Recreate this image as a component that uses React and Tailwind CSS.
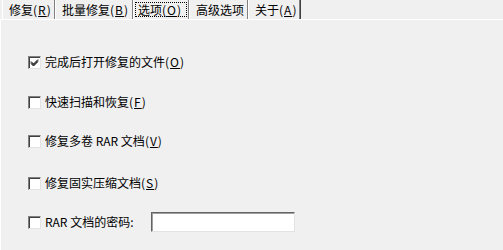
import React, { useState } from "react";

const FONT = { fontFamily: '"Noto Sans CJK SC", "Noto Sans", sans-serif' };

function Key({ k }) {
  return (
    <span className="tracking-[1px]">
      (<span className="underline underline-offset-1">{k}</span>)
    </span>
  );
}

const tabs = [
  { label: "修复", k: "R", w: "w-[53px]" },
  { label: "批量修复", k: "B", w: "w-[78px]" },
  { label: "选项", k: "O", w: "w-[56px]", active: true },
  { label: "高级选项", k: "", w: "w-[59px]" },
  { label: "关于", k: "A", w: "w-[52px]" },
];

function Check({ checked, onChange }) {
  return (
    <button
      type="button"
      onClick={onChange}
      className="w-[13px] h-[13px] shrink-0 bg-white border border-t-[#808080] border-l-[#808080] border-b-[#e3e3e3] border-r-[#e3e3e3] shadow-[inset_1px_1px_0_#404040] flex items-center justify-center p-0"
    >
      {checked && (
        <svg width="9" height="9" viewBox="0 0 9 9">
          <path d="M1 3.5 L3.5 6 L8 1.5 M1 4.5 L3.5 7 L8 2.5 M1 5.5 L3.5 8 L8 3.5" stroke="#000" strokeWidth="1" fill="none" />
        </svg>
      )}
    </button>
  );
}

export default function App() {
  const [opts, setOpts] = useState({ open: true, fast: false, vol: false, solid: false, pwd: false });
  const [pwd, setPwd] = useState("");
  const toggle = (k) => setOpts((o) => ({ ...o, [k]: !o[k] }));

  const rows = [
    { k: "open", mt: "mt-[32px]", text: <>完成后打开修复的文件<Key k="O" /></> },
    { k: "fast", mt: "mt-[20px]", text: <>快速扫描和恢复<Key k="F" /></> },
    { k: "vol", mt: "mt-[19px]", text: <>修复多卷 RAR 文档<Key k="V" /></> },
    { k: "solid", mt: "mt-[22px]", text: <>修复固实压缩文档<Key k="S" /></> },
  ];

  return (
    <div className="w-[503px] h-[250px] bg-[#f0f0f0] text-black text-[12px] leading-none overflow-hidden" style={FONT}>
      {/* tabs */}
      <div className="flex h-[19px] pl-[2px] bg-[#f0f0f0]">
        {tabs.map((t) => (
          <div
            key={t.label}
            className={`${t.w} h-[19px] border-l border-l-white border-r border-r-[#808080] shadow-[1px_0_0_#404040] flex items-center`}
          >
            {t.active ? (
              <div className="ml-[1px] mr-[1px] flex-1 h-[15px] border border-dotted border-black flex items-center pl-[2px]">
                {t.label}<Key k={t.k} />
              </div>
            ) : (
              <div className="pl-[6px]">
                {t.label}
                {t.k && <Key k={t.k} />}
              </div>
            )}
          </div>
        ))}
      </div>

      {/* panel */}
      <div className="h-[231px] border-t border-t-white border-l border-l-white pl-[27px]">
        {rows.map((r) => (
          <div key={r.k} className={`${r.mt} h-[20px] flex items-center gap-[4px]`}>
            <Check checked={opts[r.k]} onChange={() => toggle(r.k)} />
            <span>{r.text}</span>
          </div>
        ))}
        <div className="mt-[19px] h-[20px] flex items-center">
          <Check checked={opts.pwd} onChange={() => toggle("pwd")} />
          <span className="ml-[4px] w-[106px]">RAR 文档的密码:</span>
          <input
            type="password"
            value={pwd}
            onChange={(e) => setPwd(e.target.value)}
            className="w-[144px] h-[20px] bg-white border border-t-[#646464] border-l-[#646464] border-b-[#e3e3e3] border-r-[#e3e3e3] shadow-[inset_1px_1px_0_#a0a0a0] outline-none px-1"
          />
        </div>
      </div>
    </div>
  );
}
